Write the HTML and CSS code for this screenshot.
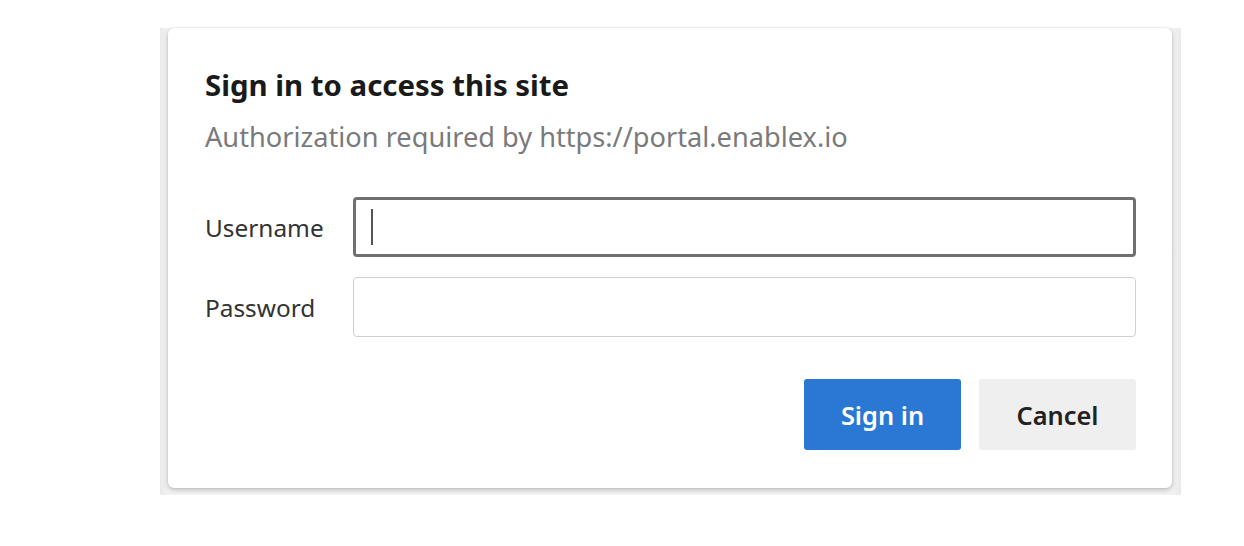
FILE: index.html
```html
<!DOCTYPE html>
<html>
<head>
<meta charset="utf-8">
<link rel="stylesheet" href="styles.css">
</head>
<body>
<div class="page">
  <div class="backdrop">
    <div class="dialog">
      <h1 class="title">Sign in to access this site</h1>
      <p class="subtitle">Authorization required by https://portal.enablex.io</p>
      <div class="form">
        <div class="row">
          <label class="label">Username</label>
          <div class="input input-focus"><span class="caret"></span></div>
        </div>
        <div class="row">
          <label class="label">Password</label>
          <div class="input"></div>
        </div>
      </div>
      <div class="actions">
        <button class="btn btn-primary">Sign in</button>
        <button class="btn btn-secondary">Cancel</button>
      </div>
    </div>
  </div>
</div>
</body>
</html>
```
FILE: styles.css
```css
html, body {
  margin: 0;
  padding: 0;
  background: #ffffff;
}
.page {
  width: 1244px;
  height: 546px;
  padding: 28px 0 0 160px;
  box-sizing: border-box;
  font-family: "Noto Sans", "Open Sans", sans-serif;
}
.backdrop {
  width: 1021px;
  height: 467px;
  background: linear-gradient(to right, #e9e9e9, #f3f3f3 8px, #f3f3f3 calc(100% - 9px), #e9e9e9);
  box-sizing: border-box;
  padding: 0 9px 7px 8px;
}
.dialog {
  height: 460px;
  background: #ffffff;
  border-radius: 6px;
  box-shadow: 0 2px 5px rgba(0,0,0,0.22), 0 0 2px rgba(0,0,0,0.12);
  box-sizing: border-box;
  padding: 39px 36px 0 37px;
  display: flex;
  flex-direction: column;
}
.title {
  margin: 0;
  font-size: 29.4px;
  line-height: 36px;
  font-weight: 700;
  color: #1a1a1a;
}
.subtitle {
  margin: 17px 0 0 0;
  font-size: 27.2px;
  line-height: 34px;
  color: #7a7a7a;
}
.form {
  margin-top: 43px;
  display: flex;
  flex-direction: column;
  gap: 20px;
}
.row {
  display: flex;
  align-items: center;
}
.label {
  width: 148px;
  font-size: 24.4px;
  color: #333333;
}
.input {
  flex: 1;
  height: 60px;
  box-sizing: border-box;
  border: 1px solid #d0d0d0;
  border-radius: 4px;
  display: flex;
  align-items: center;
  padding-left: 15px;
}
.input-focus {
  border: 3px solid #707070;
}
.caret {
  width: 2px;
  height: 36px;
  background: #555555;
}
.actions {
  margin-top: 42px;
  display: flex;
  justify-content: flex-end;
  gap: 18px;
}
.btn {
  width: 157px;
  height: 71px;
  border: none;
  border-radius: 3px;
  font-family: "Noto Sans", "Open Sans", sans-serif;
  font-size: 25.4px;
  font-weight: 600;
}
.btn-primary {
  background: #2b78d4;
  color: #ffffff;
}
.btn-secondary {
  background: #efefef;
  color: #222222;
}
```
